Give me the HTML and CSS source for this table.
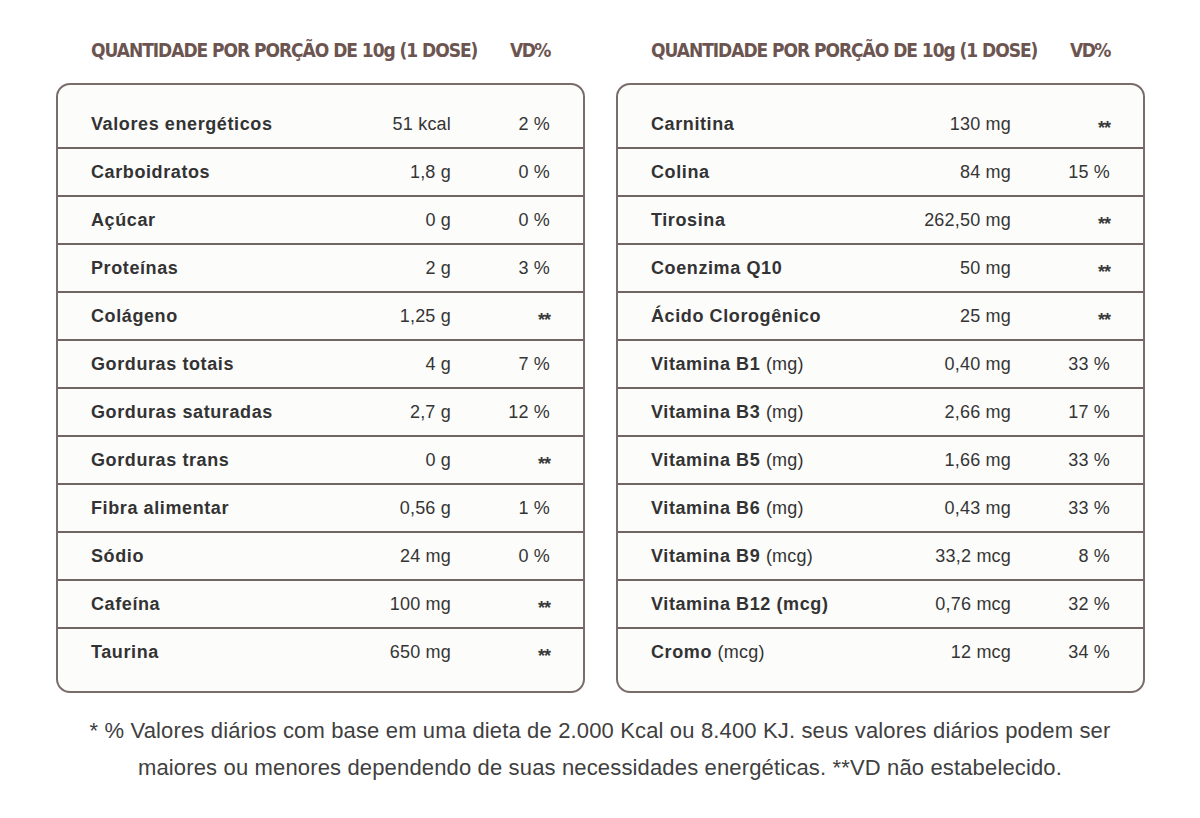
FILE: index.html
```html
<!DOCTYPE html>
<html lang="pt-BR">
<head>
<meta charset="utf-8">
<title>Tabela nutricional</title>
<link rel="stylesheet" href="styles.css">
</head>
<body>
<div class="page">
  <div class="tables">
    <section class="panel">
      <div class="head">
        <span class="h-name">QUANTIDADE POR PORÇÃO DE 10g (1 DOSE)</span>
        <span class="h-vd">VD%</span>
      </div>
      <div class="box">
        <div class="row"><span class="n">Valores energéticos</span><span class="v">51 kcal</span><span class="d">2 %</span></div>
        <div class="row"><span class="n">Carboidratos</span><span class="v">1,8 g</span><span class="d">0 %</span></div>
        <div class="row"><span class="n">Açúcar</span><span class="v">0 g</span><span class="d">0 %</span></div>
        <div class="row"><span class="n">Proteínas</span><span class="v">2 g</span><span class="d">3 %</span></div>
        <div class="row"><span class="n">Colágeno</span><span class="v">1,25 g</span><span class="d star">**</span></div>
        <div class="row"><span class="n">Gorduras totais</span><span class="v">4 g</span><span class="d">7 %</span></div>
        <div class="row"><span class="n">Gorduras saturadas</span><span class="v">2,7 g</span><span class="d">12 %</span></div>
        <div class="row"><span class="n">Gorduras trans</span><span class="v">0 g</span><span class="d star">**</span></div>
        <div class="row"><span class="n">Fibra alimentar</span><span class="v">0,56 g</span><span class="d">1 %</span></div>
        <div class="row"><span class="n">Sódio</span><span class="v">24 mg</span><span class="d">0 %</span></div>
        <div class="row"><span class="n">Cafeína</span><span class="v">100 mg</span><span class="d star">**</span></div>
        <div class="row"><span class="n">Taurina</span><span class="v">650 mg</span><span class="d star">**</span></div>
      </div>
    </section>
    <section class="panel">
      <div class="head">
        <span class="h-name">QUANTIDADE POR PORÇÃO DE 10g (1 DOSE)</span>
        <span class="h-vd">VD%</span>
      </div>
      <div class="box">
        <div class="row"><span class="n">Carnitina</span><span class="v">130 mg</span><span class="d star">**</span></div>
        <div class="row"><span class="n">Colina</span><span class="v">84 mg</span><span class="d">15 %</span></div>
        <div class="row"><span class="n">Tirosina</span><span class="v">262,50 mg</span><span class="d star">**</span></div>
        <div class="row"><span class="n">Coenzima Q10</span><span class="v">50 mg</span><span class="d star">**</span></div>
        <div class="row"><span class="n">Ácido Clorogênico</span><span class="v">25 mg</span><span class="d star">**</span></div>
        <div class="row"><span class="n">Vitamina B1 <span class="unit">(mg)</span></span><span class="v">0,40 mg</span><span class="d">33 %</span></div>
        <div class="row"><span class="n">Vitamina B3 <span class="unit">(mg)</span></span><span class="v">2,66 mg</span><span class="d">17 %</span></div>
        <div class="row"><span class="n">Vitamina B5 <span class="unit">(mg)</span></span><span class="v">1,66 mg</span><span class="d">33 %</span></div>
        <div class="row"><span class="n">Vitamina B6 <span class="unit">(mg)</span></span><span class="v">0,43 mg</span><span class="d">33 %</span></div>
        <div class="row"><span class="n">Vitamina B9 <span class="unit">(mcg)</span></span><span class="v">33,2 mcg</span><span class="d">8 %</span></div>
        <div class="row"><span class="n">Vitamina B12 (mcg)</span><span class="v">0,76 mcg</span><span class="d">32 %</span></div>
        <div class="row"><span class="n">Cromo <span class="unit">(mcg)</span></span><span class="v">12 mcg</span><span class="d">34 %</span></div>
      </div>
    </section>
  </div>
  <p class="note">* % Valores diários com base em uma dieta de 2.000 Kcal ou 8.400 KJ. seus valores diários podem ser<br>maiores ou menores dependendo de suas necessidades energéticas. **VD não estabelecido.</p>
</div>
</body>
</html>
```

FILE: styles.css
```css
html, body {
  margin: 0;
  padding: 0;
  background: #ffffff;
}

.page {
  width: 1200px;
  height: 818px;
  padding-top: 38px;
  box-sizing: border-box;
  font-family: "Liberation Sans", Arial, sans-serif;
  color: #353535;
}

.tables {
  display: flex;
  gap: 31px;
  padding-left: 56px;
}

.panel {
  width: 529px;
  display: flex;
  flex-direction: column;
}

.head {
  display: flex;
  justify-content: space-between;
  padding: 0 35px;
  height: 24px;
  line-height: 24px;
  margin-bottom: 21px;
  font-family: "DejaVu Sans Condensed", "Liberation Sans", sans-serif;
  font-weight: bold;
  font-size: 19px;
  letter-spacing: -1.05px;
  color: #6c5550;
  white-space: nowrap;
}

.h-vd {
  letter-spacing: -1.5px;
}

.box {
  border: 2px solid #786d69;
  border-radius: 14px;
  padding: 16px 0;
  background: #fcfcfb;
}

.row {
  display: grid;
  grid-template-columns: 1fr 160px 99px;
  align-items: center;
  height: 46px;
  border-bottom: 2px solid #6f6562;
  padding: 0 33px;
  font-size: 18px;
  letter-spacing: 0.2px;
}

.row:last-child {
  border-bottom: none;
}

.n {
  font-weight: bold;
  color: #333333;
  white-space: nowrap;
  letter-spacing: 0.6px;
}

.unit {
  font-weight: normal;
  letter-spacing: 0.2px;
}

.v {
  text-align: right;
  white-space: nowrap;
}

.d {
  text-align: right;
  white-space: nowrap;
}

.star {
  font-size: 18px;
  font-weight: bold;
  position: relative;
  top: 4px;
  letter-spacing: -1px;
  color: #3a3a3a;
}

.note {
  margin: 19px 0 0 0;
  text-align: center;
  font-size: 22px;
  line-height: 37px;
  letter-spacing: 0.15px;
  color: #404040;
}
```
